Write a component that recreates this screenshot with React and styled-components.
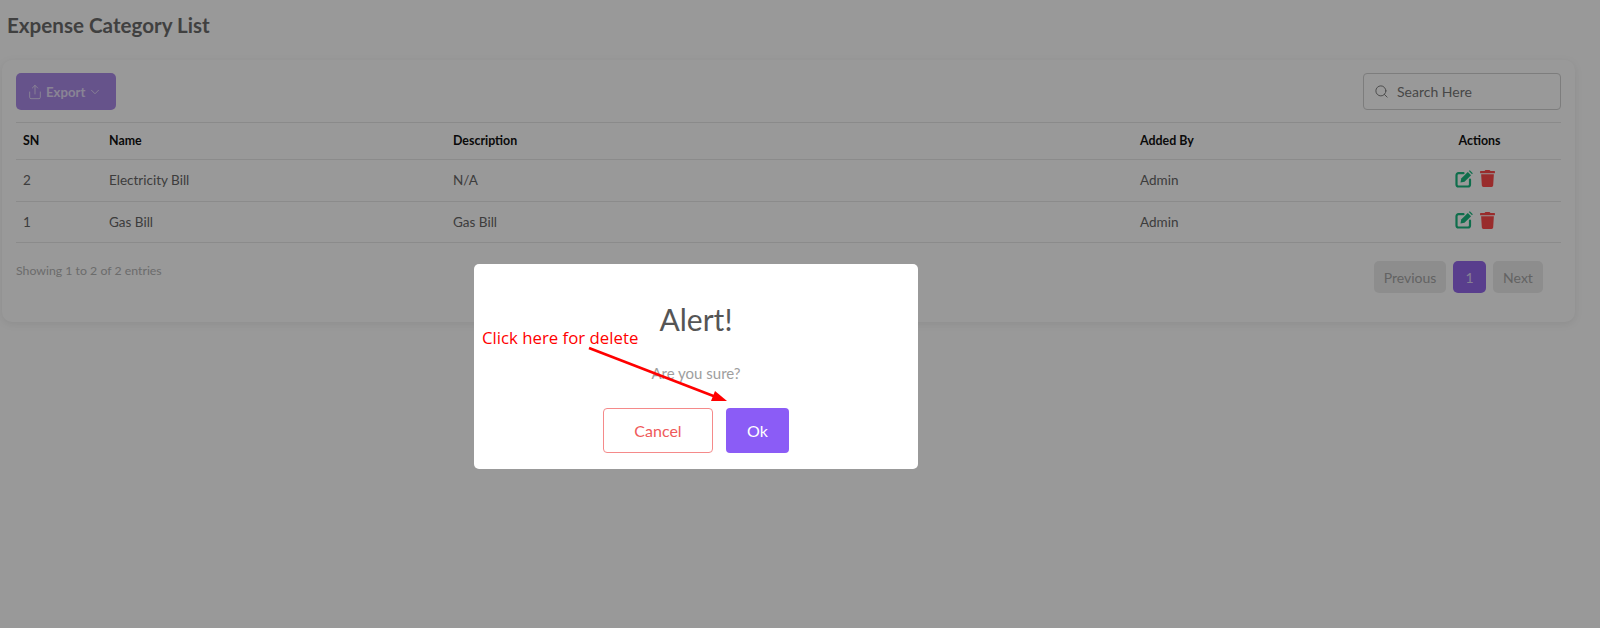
import React from "react";
import styled, { createGlobalStyle } from "styled-components";
import { Share, ChevronDown, Search } from "lucide-react";
import { FaTrash } from "react-icons/fa";

const Global = createGlobalStyle`
  html, body { margin: 0; padding: 0; background: #fff; }
  body { font-family: "Lato", "Noto Sans", sans-serif; color: #555; }
  * { box-sizing: border-box; }
`;

const Page = styled.div`
  position: relative;
  width: 1600px;
  height: 628px;
  overflow: hidden;
  padding: 0 25px 0 2px;
`;
const Title = styled.h1`
  margin: 0;
  padding: 12px 0 0 5px;
  height: 60px;
  font-size: 20.6px;
  line-height: 26px;
  font-weight: 700;
  color: #6c6c6c;
`;
const Card = styled.section`
  height: 262px;
  padding: 13px 14px 0 14px;
  background: #fff;
  border-radius: 10px;
  box-shadow: 0 2px 8px rgba(0, 0, 0, 0.08);
`;
const Toolbar = styled.div`
  display: flex;
  justify-content: space-between;
  height: 50px;
  border-bottom: 1px solid #e6e6e6;
`;
const ExportButton = styled.div`
  width: 100px;
  height: 37px;
  display: flex;
  align-items: center;
  padding-left: 11px;
  gap: 3px;
  background: #ab8ae8;
  border-radius: 5px;
  color: #e4dcf8;
  font-size: 13.2px;
  font-weight: 700;
`;
const SearchBox = styled.div`
  width: 198px;
  height: 37px;
  display: flex;
  align-items: center;
  gap: 8px;
  padding-left: 10px;
  border: 1px solid #d0d0d0;
  border-radius: 4px;
  font-size: 14px;
  color: #777;
`;
const Row = styled.div`
  display: grid;
  grid-template-columns: 86px 344px 687px 1fr 130px;
  align-items: center;
  height: ${(p) => p.$h}px;
  padding: 0 0 1px 7px;
  border-bottom: 1px solid #e8e8e8;
  font-size: ${(p) => (p.$head ? 12.4 : 13.5)}px;
  color: ${(p) => (p.$head ? "#111" : "#666")};
  font-weight: ${(p) => (p.$head ? 700 : 400)};
`;
const ActionHead = styled.div`
  text-align: center;
  padding-right: 33px;
`;
const Actions = styled.div`
  display: flex;
  align-items: center;
  gap: 6px;
  padding-left: 24px;
  margin-top: -3px;
`;
const Footer = styled.div`
  display: flex;
  justify-content: space-between;
  padding-top: 18px;
`;
const Info = styled.div`
  font-size: 12.3px;
  line-height: 16px;
  margin-top: 2px;
  color: #b4b4b4;
`;
const Pager = styled.div`
  display: flex;
  gap: 7px;
  padding-right: 18px;
`;
const PageBtn = styled.div`
  height: 32px;
  width: ${(p) => p.$w}px;
  display: flex;
  align-items: center;
  justify-content: center;
  border-radius: 5px;
  font-size: 14px;
  background: ${(p) => (p.$active ? "#9468ec" : "#ececec")};
  color: ${(p) => (p.$active ? "#dfd6f5" : "#a5a5a5")};
`;
const Overlay = styled.div`
  position: absolute;
  inset: 0;
  background: rgba(0, 0, 0, 0.4);
`;
const Modal = styled.div`
  position: absolute;
  left: 474px;
  top: 264px;
  width: 444px;
  height: 205px;
  background: #fff;
  border-radius: 5px;
  text-align: center;
  padding-top: 35px;
`;
const ModalTitle = styled.h2`
  margin: 0;
  font-size: 30px;
  line-height: 40px;
  font-weight: 400;
  color: #555;
`;
const ModalText = styled.p`
  margin: 24px 0 0;
  font-size: 15px;
  line-height: 20px;
  color: #9e9e9e;
`;
const ModalButtons = styled.div`
  display: flex;
  justify-content: center;
  gap: 13px;
  margin-top: 25px;
`;
const Cancel = styled.div`
  width: 110px;
  height: 45px;
  display: flex;
  align-items: center;
  justify-content: center;
  border: 1.5px solid #f58a8a;
  border-radius: 4px;
  color: #ef5a5a;
  font-size: 16px;
`;
const Ok = styled.div`
  width: 63px;
  height: 45px;
  display: flex;
  align-items: center;
  justify-content: center;
  border-radius: 4px;
  background: #8b5cf6;
  color: #fff;
  font-size: 16px;
`;
const Note = styled.div`
  position: absolute;
  left: 482px;
  top: 327px;
  font-family: "Open Sans", sans-serif;
  font-size: 16.8px;
  line-height: 22px;
  color: #ff0000;
`;
const Arrow = styled.svg`
  position: absolute;
  left: 0;
  top: 0;
`;

const EditIcon = () => (
  <svg width="18" height="18" viewBox="0 0 18 18" fill="none">
    <path
      d="M8.5 3.2H3.5a2 2 0 0 0-2 2V14.5a2 2 0 0 0 2 2H13a2 2 0 0 0 2-2V9.5"
      stroke="#1ab87f"
      strokeWidth="2.2"
      strokeLinecap="round"
    />
    <path d="M5.5 12.5l.7-4L12.8 1.9l3.3 3.3-6.6 6.6z" fill="#1ab87f" />
    <path d="M13.8 1l1-.8 3 3-.8 1z" fill="#1ab87f" />
  </svg>
);

const rows = [
  ["2", "Electricity Bill", "N/A", 42],
  ["1", "Gas Bill", "Gas Bill", 41],
];

export default function App() {
  return (
    <>
      <Global />
      <Page>
        <Title>Expense Category List</Title>
        <Card>
          <Toolbar>
            <ExportButton>
              <Share size={16} strokeWidth={1.4} />
              Export
              <ChevronDown size={14} strokeWidth={1.6} />
            </ExportButton>
            <SearchBox>
              <Search size={15} strokeWidth={1.5} />
              Search Here
            </SearchBox>
          </Toolbar>
          <Row $head $h={37}>
            <div>SN</div>
            <div>Name</div>
            <div>Description</div>
            <div>Added By</div>
            <ActionHead>Actions</ActionHead>
          </Row>
          {rows.map(([sn, name, desc, h]) => (
            <Row key={sn} $h={h}>
              <div>{sn}</div>
              <div>{name}</div>
              <div>{desc}</div>
              <div>Admin</div>
              <Actions>
                <EditIcon />
                <FaTrash size={17} color="#ff4a4a" />
              </Actions>
            </Row>
          ))}
          <Footer>
            <Info>Showing 1 to 2 of 2 entries</Info>
            <Pager>
              <PageBtn $w={72}>Previous</PageBtn>
              <PageBtn $w={33} $active>1</PageBtn>
              <PageBtn $w={50}>Next</PageBtn>
            </Pager>
          </Footer>
        </Card>
        <Overlay />
        <Modal>
          <ModalTitle>Alert!</ModalTitle>
          <ModalText>Are you sure?</ModalText>
          <ModalButtons>
            <Cancel>Cancel</Cancel>
            <Ok>Ok</Ok>
          </ModalButtons>
        </Modal>
        <Note>Click here for delete</Note>
        <Arrow width="1600" height="628" viewBox="0 0 1600 628">
          <line x1="589" y1="348" x2="716" y2="397" stroke="#f00" strokeWidth="2.6" />
          <polygon points="727,401 711,401 715,391" fill="#f00" />
        </Arrow>
      </Page>
    </>
  );
}
